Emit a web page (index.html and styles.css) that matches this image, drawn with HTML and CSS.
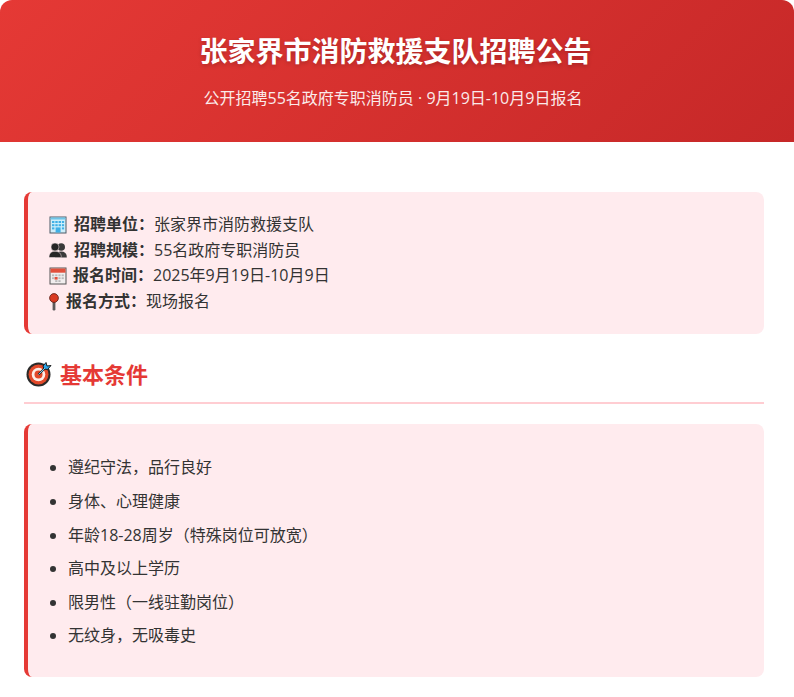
FILE: index.html
```html
<!DOCTYPE html>
<html lang="zh-CN">
<head>
<meta charset="utf-8">
<title>张家界市消防救援支队招聘公告</title>
<link rel="stylesheet" href="styles.css">
</head>
<body>
<header class="hero">
  <h1 class="hero-title">张家界市消防救援支队招聘公告</h1>
  <p class="hero-sub">公开招聘55名政府专职消防员 · 9月19日-10月9日报名</p>
</header>
<main class="content">
  <section class="card info">
    <div class="row">
      <svg class="ico" viewBox="0 0 18 18"><rect x=".5" y=".5" width="17" height="17" fill="#4d5b66"/><rect x="1.5" y="1.5" width="15" height="15" fill="#cdeefa"/><rect x="1.5" y="1.5" width="15" height="2" fill="#6fc4e8"/><g fill="#3fb0e6"><rect x="3" y="5" width="2.4" height="2"/><rect x="6.3" y="5" width="2.4" height="2"/><rect x="9.6" y="5" width="2.4" height="2"/><rect x="12.9" y="5" width="2.2" height="2"/><rect x="3" y="8.2" width="2.4" height="2"/><rect x="6.3" y="8.2" width="2.4" height="2"/><rect x="9.6" y="8.2" width="2.4" height="2"/><rect x="12.9" y="8.2" width="2.2" height="2"/><rect x="3" y="11.4" width="2.4" height="2"/><rect x="12.9" y="11.4" width="2.2" height="2"/><rect x="6.6" y="11.4" width="5" height="5.1"/></g></svg>
      <b class="label">招聘单位：</b><span>张家界市消防救援支队</span>
    </div>
    <div class="row">
      <svg class="ico" viewBox="0 0 18 18"><g fill="#3a3a3a"><circle cx="12.2" cy="6" r="3.8"/><path d="M6 16.5c0-4 2.4-6 6.2-6s5.6 2 5.6 6z"/></g><g fill="#262626" stroke="#ffebee" stroke-width=".5"><circle cx="6" cy="6" r="4"/><path d="M0 16.5c0-4 2-6.2 6-6.2s6.3 2.2 6.3 6.2z"/></g></svg>
      <b class="label">招聘规模：</b><span>55名政府专职消防员</span>
    </div>
    <div class="row">
      <svg class="ico ico-cal" viewBox="0 0 18 18"><rect x=".5" y=".5" width="17" height="17" fill="#555"/><rect x="1.5" y="1.5" width="15" height="15" fill="#f1eeee"/><rect x="1.5" y="1.5" width="15" height="4.2" fill="#e2503c"/><g fill="#b9b9b9"><rect x="3" y="7.4" width="2.2" height="1.8"/><rect x="6.2" y="7.4" width="2.2" height="1.8"/><rect x="9.4" y="7.4" width="2.2" height="1.8"/><rect x="12.6" y="7.4" width="2.2" height="1.8"/><rect x="3" y="10.3" width="2.2" height="1.8"/><rect x="9.4" y="10.3" width="2.2" height="1.8"/><rect x="12.6" y="10.3" width="2.2" height="1.8"/><rect x="6.2" y="13.2" width="2.2" height="1.8"/><rect x="9.4" y="13.2" width="2.2" height="1.8"/></g><rect x="5.6" y="10" width="3" height="2.6" fill="#e2503c"/></svg>
      <b class="label">报名时间：</b><span>2025年9月19日-10月9日</span>
    </div>
    <div class="row">
      <svg class="ico ico-pin" viewBox="0 0 10 18"><rect x="3.6" y="8" width="2.8" height="9.5" rx="1.2" fill="#5b5b5b"/><circle cx="5" cy="5" r="4.4" fill="#d93a22" stroke="#5a1a10" stroke-width=".8"/></svg>
      <b class="label">报名方式：</b><span>现场报名</span>
    </div>
  </section>
  <h2 class="section-title">
    <svg class="ico-target" viewBox="0 0 26 26"><circle cx="12.5" cy="13.5" r="12" fill="#2a2a2a"/><circle cx="12.5" cy="13.5" r="10" fill="#e2492a"/><circle cx="12.5" cy="13.5" r="6.8" fill="#fbeee8"/><circle cx="12.5" cy="13.5" r="4" fill="#e2492a"/><path d="M12.5 13.5 20 6" stroke="#2a2a2a" stroke-width="2"/><path d="M17 5l3-3.5 1 3.5 4-.5-3.5 4-3.5-.5z" fill="#2ba5e8" stroke="#1d1d1d" stroke-width="1"/><path d="M12.5 13.5 19 7" stroke="#6ed0f5" stroke-width="1"/></svg>
    <span>基本条件</span>
  </h2>
  <section class="card">
    <ul class="list">
      <li>遵纪守法，品行良好</li>
      <li>身体、心理健康</li>
      <li>年龄18-28周岁（特殊岗位可放宽）</li>
      <li>高中及以上学历</li>
      <li>限男性（一线驻勤岗位）</li>
      <li>无纹身，无吸毒史</li>
    </ul>
  </section>
</main>
</body>
</html>
```
FILE: styles.css
```css
* { box-sizing: border-box; }
html, body { margin: 0; padding: 0; background: #fff; }
body {
  font-family: "Open Sans", "Noto Sans CJK SC", sans-serif;
  font-size: 16px;
  line-height: 1.6;
  color: #333;
}
.hero {
  height: 142px;
  padding-top: 30px;
  text-align: center;
  color: #fff;
  border-radius: 12px 12px 0 0;
  background: linear-gradient(135deg, #e53935, #c62828);
}
.hero-title {
  margin: 0 0 13px;
  padding-right: 3px;
  font-size: 28px;
  line-height: 42px;
  font-weight: 700;
  text-shadow: 0 2px 4px rgba(0, 0, 0, .2);
}
.hero-sub {
  margin: 0;
  padding-right: 8px;
  font-size: 16px;
  line-height: 26px;
  opacity: .9;
}
.content { padding: 50px 30px 16px 24px; }
.card {
  padding: 20px;
  background: #ffebee;
  border-left: 4px solid #e53935;
  border-radius: 8px;
}
.info { padding-left: 21px; }
.row { display: flex; align-items: center; height: 25.6px; }
.ico { width: 18px; height: 18px; margin-right: 7px; flex: none; }
.ico-cal { margin-right: 6px; }
.ico-pin { width: 10px; margin-right: 7px; }
.label { font-weight: 700; margin-right: 0; }
.section-title {
  display: flex;
  align-items: center;
  gap: 8px;
  height: 52px;
  margin: 18px 0 20px;
  padding: 0 0 6px 2px;
  font-size: 22px;
  line-height: 33px;
  font-weight: 700;
  color: #e53935;
  border-bottom: 2px solid #ffcdd2;
}
.ico-target { width: 26px; height: 26px; flex: none; }
.list { margin: 11px 0 1px; padding-left: 20px; }
.list li { margin-bottom: 8px; }
```
